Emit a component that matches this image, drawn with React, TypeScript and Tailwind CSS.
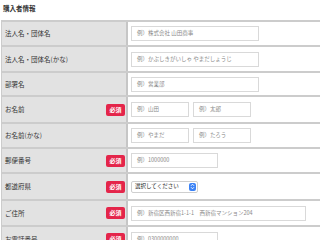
const rows: {
  label: string;
  required?: boolean;
  h: string;
  kind: "text" | "pair" | "select";
  ph?: string[];
  w?: string;
}[] = [
  { label: "法人名・団体名", h: "h-[25px]", kind: "text", ph: ["例）株式会社 山田商事"], w: "w-[128px]" },
  { label: "法人名・団体名(かな)", h: "h-[26px]", kind: "text", ph: ["例）かぶしきがいしゃ やまだしょうじ"], w: "w-[128px]" },
  { label: "部署名", h: "h-[24px]", kind: "text", ph: ["例）営業部"], w: "w-[128px]" },
  { label: "お名前", required: true, h: "h-[27px]", kind: "pair", ph: ["例）山田", "例）太郎"] },
  { label: "お名前(かな)", h: "h-[25px]", kind: "pair", ph: ["例）やまだ", "例）たろう"] },
  { label: "郵便番号", required: true, h: "h-[25px]", kind: "text", ph: ["例）1000000"], w: "w-[87px]" },
  { label: "都道府県", required: true, h: "h-[27px]", kind: "select" },
  { label: "ご住所", required: true, h: "h-[26px]", kind: "text", ph: ["例）新宿区西新宿1-1-1　西新宿マンション204"], w: "w-[175px]" },
  { label: "お電話番号", required: true, h: "h-[26px]", kind: "text", ph: ["例）0300000000"], w: "w-[87px]" },
];

function Field({ ph, w }: { ph: string; w: string }) {
  return (
    <div className={`${w} h-[15px] border border-[#d9d9d9] bg-white flex items-center pl-[5px] text-[5.5px] text-[#8a8a8a] whitespace-nowrap overflow-hidden`}>
      {ph}
    </div>
  );
}

export default function App() {
  return (
    <div className="w-[320px] h-[240px] overflow-hidden bg-white font-['Noto_Sans_CJK_JP',sans-serif] text-[#333]">
      <div className="h-[20px] pl-[3px] pt-[5px] text-[6.5px] font-bold leading-none">購入者情報</div>
      <div className="ml-[1px] border-l border-t-2 border-[#cccccc]">
        {rows.map((r) => (
          <div key={r.label} className={`flex ${r.h} border-b-2 border-[#cccccc]`}>
            <div className="w-[126px] shrink-0 bg-[#e2e2e2] border-r-2 border-[#c6c6c6] flex items-center justify-between pl-[3px] pr-[1px]">
              <span className="text-[6.5px] leading-none">{r.label}</span>
              {r.required && (
                <span className="bg-[#e4254a] text-white text-[6px] font-bold leading-none rounded-[2px] w-[19px] h-[12px] flex items-center justify-center">
                  必須
                </span>
              )}
            </div>
            <div className="flex-1 flex items-center gap-[4px] pl-[3px]">
              {r.kind === "text" && <Field ph={r.ph![0]} w={r.w!} />}
              {r.kind === "pair" && (
                <>
                  <Field ph={r.ph![0]} w="w-[58px]" />
                  <Field ph={r.ph![1]} w="w-[58px]" />
                </>
              )}
              {r.kind === "select" && (
                <div className="w-[67px] h-[12px] border border-[#cfcfcf] rounded-[2px] bg-white flex items-center justify-between pl-[3px] pr-[1px] text-[5.5px] text-[#222] whitespace-nowrap">
                  <span>選択してください</span>
                  <span className="w-[7px] h-[8px] rounded-[2px] bg-[#3b82f6] flex flex-col items-center justify-center">
                    <svg width="5" height="7" viewBox="0 0 5 7">
                      <path d="M1 2.8 L2.5 1.2 L4 2.8 M1 4.2 L2.5 5.8 L4 4.2" stroke="white" strokeWidth="0.9" fill="none" />
                    </svg>
                  </span>
                </div>
              )}
            </div>
          </div>
        ))}
      </div>
    </div>
  );
}
